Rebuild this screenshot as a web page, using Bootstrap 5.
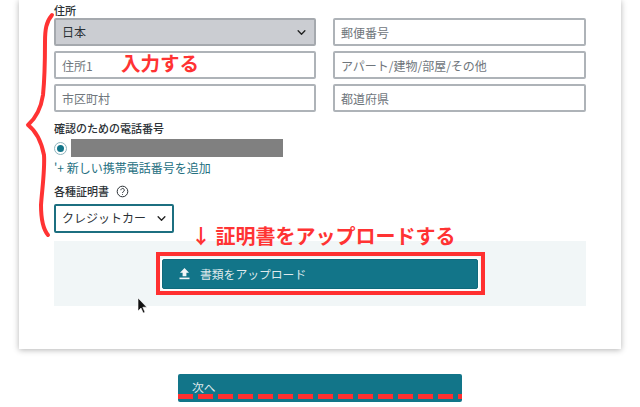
<!DOCTYPE html>
<html lang="ja">
<head>
<meta charset="utf-8">
<title>書類をアップロード</title>
<link href="https://cdn.jsdelivr.net/npm/bootstrap@5.3.0/dist/css/bootstrap.min.css" rel="stylesheet">
<style>
html,body{height:407px;overflow:hidden;background:#fff}
body{position:relative;font-family:"Noto Sans CJK JP","Liberation Sans",sans-serif;color:#2b3136;font-size:12px}
.sheet{width:602px;height:349px;margin-left:19px;padding:3px 35px 0;background:#fff;box-shadow:0 1px 6px rgba(0,0,0,.3)}
.fld-label{font-size:11px;font-weight:500;line-height:14px;margin:0;color:#2b3136}
.addr-grid{display:grid;grid-template-columns:262px 253px;column-gap:17px;row-gap:5px;margin-top:1px}
.fld{height:28px;min-height:0;border:2px solid #aeb3b8;border-radius:2px;font-size:12px;padding:0 6px;color:#2b3136;box-shadow:none}
.fld::placeholder{color:#6f767c;opacity:1}
select.fld{background-position:right 7px center;background-size:11px 9px;padding:0 22px 0 6px;background-image:url("data:image/svg+xml,%3csvg xmlns='http://www.w3.org/2000/svg' viewBox='0 0 16 16'%3e%3cpath fill='none' stroke='%23222' stroke-linecap='round' stroke-linejoin='round' stroke-width='2.4' d='m2 5 6 6 6-6'/%3e%3c/svg%3e")}
.fld-gray{background-color:#cbcdd2;border-color:#a5a9ae}
.phone-label{margin-top:9px}
.phone-row{height:18px;margin-top:4px}
.radio-dot{width:13px;height:13px;border:1.5px solid #8fb4bd;border-radius:50%;background:#fff;display:flex;align-items:center;justify-content:center}
.radio-dot i{display:block;width:7px;height:7px;border-radius:50%;background:#127589}
.mask{width:212px;height:18px;background:#808080;margin-left:4px}
.add-link{display:block;font-size:12px;line-height:16px;margin-top:3px;color:#25707f;text-decoration:none}
.doc-label{margin-top:8px;gap:7px}
.doc-select.fld{display:block;width:120px;margin-top:6px;border-color:#1c6f80;padding-left:6px;padding-right:26px;height:28.5px;background-position:right 5px center}
.up-panel{height:65px;margin-top:8px;background:#f1f6f7;padding:18px 0 0 108px}
.up-btn{width:316px;height:30px;background:#127589;border:1px solid #0f6a7c;border-radius:2px;color:#dfe9ec;font-size:11.8px;padding:0 0 0 15px;gap:9px;box-shadow:0 0 0 1.5px #fff}
.up-btn:hover{background:#127589;color:#dfe9ec}
.next-row{padding:25px 0 0 178px}
.next-btn{width:284px;height:28px;background:#127589;border:0;border-radius:2px;color:#dfe9ec;font-size:11.8px;padding:0 0 2px 14px;text-align:left;line-height:18px}
.next-btn:hover{background:#127589;color:#dfe9ec}
.note{position:absolute;color:#ff3333;font-weight:700;line-height:1;white-space:nowrap}
.note-a{left:121px;top:53px;font-size:19.5px}
.note-b{left:191px;top:226px;font-size:20px}
.red-frame{position:absolute;left:156px;top:252px;width:329px;height:43px;border:4.5px solid #ff3030}
.dash-line{position:absolute;left:178px;top:394px;width:284px;height:5px;background:repeating-linear-gradient(90deg,#ff3030 0 15px,transparent 15px 20px)}
.ink{position:absolute;left:0;top:0;pointer-events:none}
</style>
</head>
<body>
<div class="sheet">
  <p class="fld-label">住所</p>
  <div class="addr-grid">
    <select class="form-select fld fld-gray" aria-label="国"><option>日本</option></select>
    <input class="form-control fld" placeholder="郵便番号">
    <input class="form-control fld" placeholder="住所1">
    <input class="form-control fld" placeholder="アパート/建物/部屋/その他">
    <input class="form-control fld" placeholder="市区町村">
    <input class="form-control fld" placeholder="都道府県">
  </div>
  <p class="fld-label phone-label">確認のための電話番号</p>
  <div class="phone-row d-flex align-items-center">
    <span class="radio-dot"><i></i></span>
    <span class="mask"></span>
  </div>
  <a class="add-link" href="#">'+ 新しい携帯電話番号を追加</a>
  <div class="fld-label doc-label d-flex align-items-center">各種証明書
    <svg width="13" height="13" viewBox="0 0 13 13" fill="none" stroke="#2b3136"><circle cx="6.5" cy="6.5" r="5.3"/><path d="M4.9 5.2a1.7 1.7 0 1 1 2.6 1.4c-.6.4-1 .7-1 1.4"/><circle cx="6.5" cy="9.6" r=".5" fill="#2b3136" stroke="none"/></svg>
  </div>
  <select class="form-select fld doc-select" aria-label="証明書の種類"><option>クレジットカード</option></select>
  <div class="up-panel">
    <button class="btn up-btn d-flex align-items-center" type="button">
      <svg width="13" height="13" viewBox="0 0 13 13" fill="#f2f6f7"><path d="M6.5 1 11 5.8H8.4v3.4H4.6V5.8H2z"/><rect x="1.5" y="10.6" width="10" height="1.6"/></svg>
      書類をアップロード
    </button>
  </div>
</div>
<div class="next-row"><button class="btn next-btn" type="button">次へ</button></div>

<svg class="ink" width="640" height="407" viewBox="0 0 640 407" fill="none">
  <path d="M52 15C46 22 45 30 45 42C45 60 45 75 43 95C41 108 36 118 28 125C36 131 41 140 44 155C45 170 42 190 41 205C41 220 43 229 48 235" stroke="#ff3333" stroke-width="4" stroke-linecap="round" stroke-linejoin="round"/>
  <path d="M138 298v13l3-3 2.2 5 1.8-.8-2.2-5h4z" fill="#111" stroke="#fff" stroke-width=".6"/>
</svg>
<span class="note note-a">入力する</span>
<span class="note note-b">↓ 証明書をアップロードする</span>
<div class="red-frame"></div>
<div class="dash-line"></div>
</body>
</html>
